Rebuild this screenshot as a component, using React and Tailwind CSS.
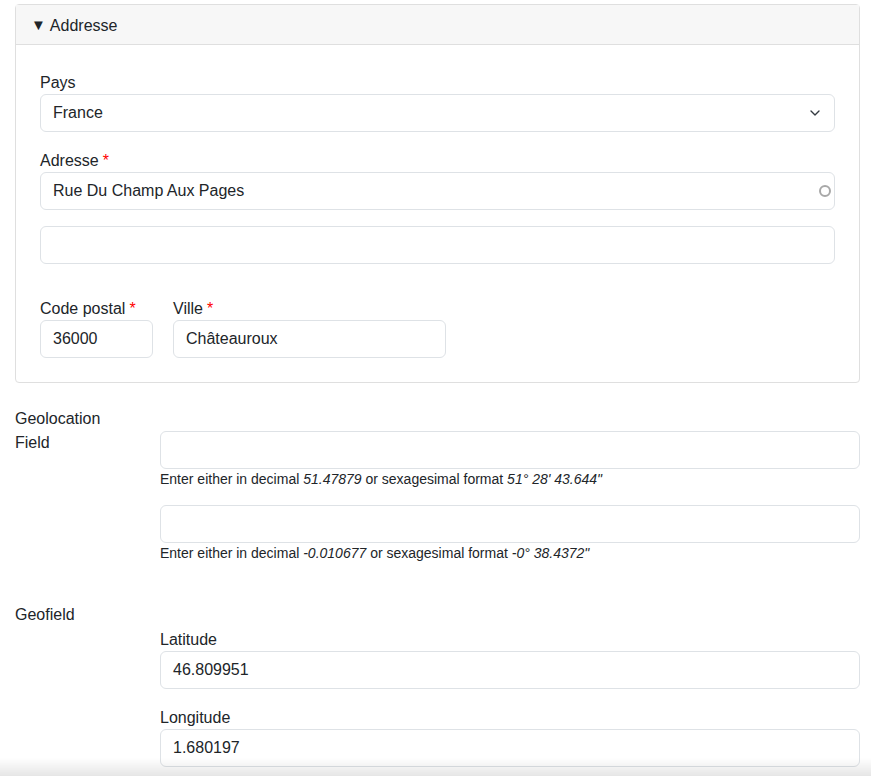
import React from 'react'
import { ChevronDown } from 'lucide-react'

const font = { fontFamily: '"Liberation Sans", Arial, sans-serif' }

const inputCls =
  'block w-full h-[38px] border border-[#dee2e6] rounded-[6px] bg-white px-3 text-[16px] text-[#212529] leading-[36px]'

const Req = () => <span className='text-[#ff0000] ml-1'>*</span>

const Label = ({ children, req }) => (
  <div className='text-[16px] pt-px leading-[23px] text-[#212529]'>
    {children}
    {req && <Req />}
  </div>
)

const Input = ({ value, className = '' }) => (
  <div className={`${inputCls} ${className}`}>{value}</div>
)

const App = () => {
  return (
    <div className='relative min-h-[776px] bg-white pl-[15px] pr-[11px] pt-1 text-[#212529]' style={font}>
      <div className='border border-[#dfdfdf] rounded-[4px]'>
        <div className='h-[40px] bg-[#f7f7f7] border-b border-[#dfdfdf] px-[15px] flex items-center text-[16px] pt-[2px]'>
          <span className='text-[15px] mr-[4px]'>▼</span>
          <span>Addresse</span>
        </div>
        <div className='px-6 pt-[25px] pb-6 flex flex-col'>
          <Label>Pays</Label>
          <div className='relative'>
            <Input value='France' />
            <ChevronDown size={16} strokeWidth={2} className='absolute right-[12px] top-[11px] text-[#343a40]' />
          </div>
          <div className='mt-4'>
            <Label req>Adresse</Label>
            <div className='relative'>
              <Input value='Rue Du Champ Aux Pages' />
              <span className='absolute right-[4px] top-[13px] w-[12px] h-[12px] rounded-full border-2 border-[#a8a8a8]'></span>
            </div>
          </div>
          <Input value='' className='mt-4' />
          <div className='mt-8 flex gap-5'>
            <div className='w-[113px]'>
              <Label req>Code postal</Label>
              <Input value='36000' />
            </div>
            <div className='w-[273px]'>
              <Label req>Ville</Label>
              <Input value='Châteauroux' />
            </div>
          </div>
        </div>
      </div>

      <div className='mt-[23px] flex'>
        <div className='w-[145px] text-[16px] leading-6 pt-px'>
          Geolocation
          <br />
          Field
        </div>
        <div className='flex-1 pt-[25px]'>
          <Input value='' />
          <div className='text-[14px] leading-[20px] text-[#212529]'>
            Enter either in decimal <i>51.47879</i> or sexagesimal format <i>51° 28' 43.644"</i>
          </div>
          <Input value='' className='mt-4' />
          <div className='text-[14px] leading-[20px] text-[#212529]'>
            Enter either in decimal <i>-0.010677</i> or sexagesimal format <i>-0° 38.4372"</i>
          </div>
        </div>
      </div>

      <div className='mt-[39px] flex'>
        <div className='w-[145px] text-[16px] leading-6 pt-px'>Geofield</div>
        <div className='flex-1 pt-[25px]'>
          <Label>Latitude</Label>
          <Input value='46.809951' />
          <div className='mt-4'>
            <Label>Longitude</Label>
            <Input value='1.680197' />
          </div>
        </div>
      </div>

      <div className='pointer-events-none fixed left-0 right-0 bottom-0 h-[18px] bg-gradient-to-b from-transparent to-black/10'></div>
    </div>
  )
}

export default App
